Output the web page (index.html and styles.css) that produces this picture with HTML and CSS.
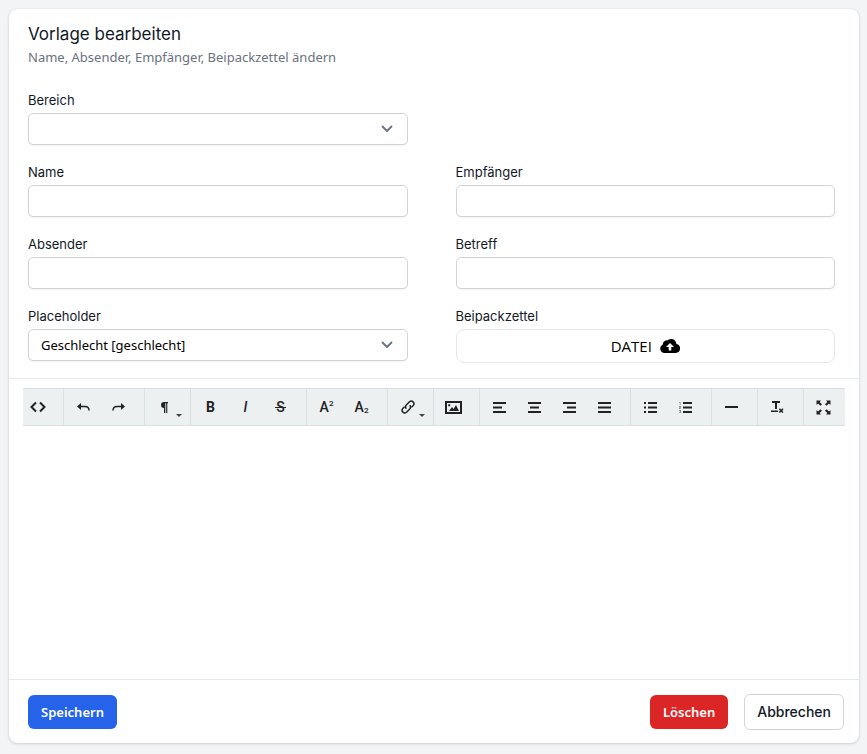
FILE: index.html
```html
<!DOCTYPE html>
<html lang="de">
<head>
<meta charset="utf-8">
<meta name="viewport" content="width=device-width, initial-scale=1">
<title>Vorlage bearbeiten</title>
<link rel="stylesheet" href="styles.css">
</head>
<body>
<form class="card">
  <header class="card-header">
    <h1 class="title">Vorlage bearbeiten</h1>
    <p class="subtitle">Name, Absender, Empfänger, Beipackzettel ändern</p>
  </header>

  <div class="fields">
    <div class="field field-first">
      <label for="bereich">Bereich</label>
      <select id="bereich" class="control select"><option></option></select>
    </div>
    <div class="field">
      <label for="name">Name</label>
      <input id="name" class="control" type="text">
    </div>
    <div class="field">
      <label for="empfaenger">Empfänger</label>
      <input id="empfaenger" class="control" type="text">
    </div>
    <div class="field">
      <label for="absender">Absender</label>
      <input id="absender" class="control" type="text">
    </div>
    <div class="field">
      <label for="betreff">Betreff</label>
      <input id="betreff" class="control" type="text">
    </div>
    <div class="field">
      <label for="placeholder">Placeholder</label>
      <select id="placeholder" class="control select"><option>Geschlecht [geschlecht]</option></select>
    </div>
    <div class="field">
      <label for="datei">Beipackzettel</label>
      <button id="datei" class="upload" type="button">DATEI
        <svg width="20" height="14" viewBox="0 0 20 14" aria-hidden="true"><path d="M4.5 14A4.4 4.4 0 0 1 2.6 5.7 5 5 0 0 1 7.6 1.200A5 5 0 0 1 10 0.300C13 -0.500 16 1.500 16.300 4.700A4.700 4.700 0 0 1 15.700 14Z"/><path class="cut" d="M10 4l4 4h-2.700v3.500H8.700V8H6z"/></svg>
      </button>
    </div>
  </div>

  <section class="editor">
    <div class="toolbar" role="toolbar">
      <div class="group group-first">
        <button type="button" class="tool" aria-label="HTML"><svg width="16" height="12" viewBox="0 0 16 12"><path class="line thick" d="M6 1.500L1.500 6 6 10.500M10 1.500L14.500 6 10 10.500"/></svg></button>
      </div>
      <div class="group">
        <button type="button" class="tool" aria-label="Rückgängig"><svg width="13" height="8" viewBox="0 0 13 8"><path d="M0 3.500L4 0v7z"/><path class="line" d="M3 3.500h5c2.500 0 4 1.500 4 4"/></svg></button>
        <button type="button" class="tool" aria-label="Wiederholen"><svg width="13" height="8" viewBox="0 0 13 8"><path d="M13 3.500L9 0v7z"/><path class="line" d="M10 3.500H5c-2.500 0-4 1.500-4 4"/></svg></button>
      </div>
      <div class="group">
        <button type="button" class="tool drop" aria-label="Formatierung"><svg width="7" height="11" viewBox="0 0 7 11"><path d="M3 0h4v1.200H6.300V11H5.200V1.200H4.300V11H3V6A3 3 0 0 1 3 0z"/></svg></button>
      </div>
      <div class="group">
        <button type="button" class="tool glyph bold">B</button>
        <button type="button" class="tool glyph italic">I</button>
        <button type="button" class="tool glyph strike">S</button>
      </div>
      <div class="group">
        <button type="button" class="tool glyph">A<sup>2</sup></button>
        <button type="button" class="tool glyph">A<sub>2</sub></button>
      </div>
      <div class="group">
        <button type="button" class="tool drop" aria-label="Link"><svg width="14" height="14" viewBox="0 0 14 14"><path class="line" d="M5.300 8.700A2.600 2.600 0 0 1 5.300 5L8.500 1.800A2.620 2.620 0 0 1 12.200 5.500L10.400 7.300M8.700 5.300A2.600 2.600 0 0 1 8.700 9L5.500 12.200A2.620 2.620 0 0 1 1.800 8.500L3.600 6.700"/></svg></button>
      </div>
      <div class="group">
        <button type="button" class="tool" aria-label="Bild"><svg width="17" height="13" viewBox="0 0 17 13"><path class="line thick" d="M1 1h15v11H1z"/><path d="M4 10l3-4 1.500 2L11 4l3 6zM3.200 3.200h2v2h-2z"/></svg></button>
      </div>
      <div class="group">
        <button type="button" class="tool" aria-label="Linksbündig"><svg width="13" height="11" viewBox="0 0 13 11"><path d="M0 0h13v2H0zM0 4.500h9v2H0zM0 9h13v2H0z"/></svg></button>
        <button type="button" class="tool" aria-label="Zentriert"><svg width="13" height="11" viewBox="0 0 13 11"><path d="M0 0h13v2H0zM2 4.500h9v2H2zM0 9h13v2H0z"/></svg></button>
        <button type="button" class="tool" aria-label="Rechtsbündig"><svg width="13" height="11" viewBox="0 0 13 11"><path d="M0 0h13v2H0zM4 4.500h9v2H4zM0 9h13v2H0z"/></svg></button>
        <button type="button" class="tool" aria-label="Blocksatz"><svg width="13" height="11" viewBox="0 0 13 11"><path d="M0 0h13v2H0zM0 4.500h13v2H0zM0 9h13v2H0z"/></svg></button>
      </div>
      <div class="group">
        <button type="button" class="tool" aria-label="Liste"><svg width="13" height="11" viewBox="0 0 13 11"><path d="M0 0h2v2H0zM4 0h9v2H4zM0 4.500h2v2H0zM4 4.500h9v2H4zM0 9h2v2H0zM4 9h9v2H4z"/></svg></button>
        <button type="button" class="tool" aria-label="Nummerierte Liste"><svg width="13" height="11" viewBox="0 0 13 11"><path d="M4 0h9v2H4zM4 4.500h9v2H4zM4 9h9v2H4z"/><path class="faint" d="M0 0h1.500v3H.800V.800H0zM0 4h2v1L1 6.500h1V7H0V6l1-1.300H0zM0 8h2v3H0v-.700h1v-.500H.500v-.500H1v-.500H0z"/></svg></button>
      </div>
      <div class="group">
        <button type="button" class="tool" aria-label="Trennlinie"><svg width="13" height="2" viewBox="0 0 13 2"><path d="M0 0h13v2H0z"/></svg></button>
      </div>
      <div class="group">
        <button type="button" class="tool" aria-label="Formatierung entfernen"><svg width="13" height="12" viewBox="0 0 13 12"><path d="M1 0h8v2H6v6H4V2H1zM0 9.500h7V11H0z"/><path class="line" d="M8.300 7.800l3.700 3.700M12 7.800l-3.700 3.700"/></svg></button>
      </div>
      <div class="group group-last">
        <button type="button" class="tool" aria-label="Vollbild"><svg width="15" height="15" viewBox="0 0 15 15"><path d="M0.500 0.500h4.500L3.600 1.900 6 4.300 4.500 5.800 2 3.400 0.500 5zM14.500 0.500V5L13 3.400 10.500 5.800 9 4.300 11.400 1.900 10 0.500zM0.500 14.500V10L2 11.600 4.500 9.200 6 10.700 3.600 13.100 5 14.500zM14.500 14.500H10l1.400-1.400L9 10.700l1.500-1.500 2.500 2.400 1.500-1.600z"/></svg></button>
      </div>
    </div>
    <div class="editor-body" contenteditable="true" role="textbox" aria-label="Inhalt"></div>
  </section>

  <footer class="footer">
    <button type="submit" class="btn primary">Speichern</button>
    <div class="footer-right">
      <button type="button" class="btn danger">Löschen</button>
      <button type="button" class="btn plain">Abbrechen</button>
    </div>
  </footer>
</form>
</body>
</html>
```
FILE: styles.css
```css
* {
  box-sizing: border-box;
}

body {
  margin: 0;
  padding: 9px 8px 11px 9px;
  min-height: 100vh;
  display: flex;
  background: #f3f4f6;
  color: #111827;
  font: 13px/18px Inter, sans-serif;
}

button,
input,
select {
  font: inherit;
  color: inherit;
  margin: 0;
}

.card {
  flex: 1;
  min-width: 0;
  display: flex;
  flex-direction: column;
  background: #fff;
  border-radius: 8px;
  box-shadow: 0 1px 3px rgba(0, 0, 0, 0.14), 0 0 1px rgba(0, 0, 0, 0.2);
}

.card-header {
  padding: 13px 19px 0;
}

.title {
  margin: 0;
  font-size: 17px;
  line-height: 24px;
  font-weight: 400;
}

.subtitle {
  margin: 2px 0 0;
  color: #6b7280;
  font-family: "Noto Sans", sans-serif;
}

.fields {
  display: grid;
  grid-template-columns: 1fr 1fr;
  gap: 18px 48px;
  padding: 25px 24px 15px 19px;
}

.field {
  display: flex;
  flex-direction: column;
  gap: 4px;
}

.field-first {
  grid-column: 1;
}

.field-first + .field {
  grid-column: 1;
}

.control {
  width: 100%;
  height: 32px;
  padding: 0 12px;
  border: 1px solid #d1d5db;
  border-radius: 5px;
  background: #fff;
  box-shadow: 0 1px 2px rgba(0, 0, 0, 0.05);
  font-family: "Noto Sans", sans-serif;
  color: #000;
}

.select {
  appearance: none;
  background: #fff url("data:image/svg+xml,%3Csvg xmlns='http://www.w3.org/2000/svg' viewBox='0 0 12 8'%3E%3Cpath d='M1.500 1.500L6 6l4.500-4.500' fill='none' stroke='%236b7280' stroke-width='1.800' stroke-linecap='round' stroke-linejoin='round'/%3E%3C/svg%3E") no-repeat right 14px center / 12px 8px;
}

.upload {
  height: 34px;
  display: flex;
  align-items: center;
  justify-content: center;
  gap: 8px;
  padding: 0;
  border: 1px solid #e5e7eb;
  border-radius: 8px;
  background: #fff;
  color: #000;
  font: 400 15px/20px "Open Sans", sans-serif;
}

.cut {
  fill: #fff;
}

.editor {
  flex: 1;
  display: flex;
  flex-direction: column;
  padding: 9px 14px 0;
  border-top: 1px solid #e5e7eb;
}

.toolbar {
  display: flex;
  height: 38px;
  background: #ecf0f1;
  border-top: 1px solid #d7e0e2;
  border-bottom: 1px solid #d7e0e2;
  color: #222;
}

.group {
  display: flex;
  padding: 0 8px 0 2px;
  border-right: 1px solid #d7e0e2;
}

.group-first {
  padding: 0 10px 0 0;
}

.group-first .tool {
  width: 30px;
}

.group-last {
  flex: 1;
  padding-right: 0;
  border-right: 0;
}

.tool {
  position: relative;
  width: 35px;
  height: 36px;
  display: flex;
  align-items: center;
  justify-content: center;
  padding: 0;
  border: 0;
  background: none;
}

.tool svg {
  fill: #222;
}

.tool .line {
  fill: none;
  stroke: #222;
  stroke-width: 1.5;
}

.tool .thick {
  stroke-width: 2;
}

.tool .faint {
  fill: #888;
}

.drop::after {
  content: "";
  position: absolute;
  right: 0;
  bottom: 8px;
  border: 3px solid transparent;
  border-top-color: #444;
  border-bottom: 0;
}

.glyph {
  font: 500 14px/16px Roboto, sans-serif;
}

.bold {
  font-weight: 700;
}

.italic {
  font-style: italic;
}

.strike::after {
  content: "";
  position: absolute;
  width: 11px;
  height: 1px;
  background: #222;
}

.glyph sup,
.glyph sub {
  font-size: 8px;
  line-height: 8px;
}

.glyph sup {
  margin-bottom: 6px;
}

.glyph sub {
  margin-top: 8px;
}

.editor-body {
  flex: 1;
  min-height: 253px;
  outline: 0;
}

.footer {
  display: flex;
  align-items: center;
  justify-content: space-between;
  padding: 14px 15px 13px 19px;
  border-top: 1px solid #e5e7eb;
}

.footer-right {
  display: flex;
  align-items: center;
  gap: 16px;
}

.btn {
  height: 34px;
  padding: 0 13px;
  border: 0;
  border-radius: 6px;
  color: #fff;
  font: 600 13px/18px "Noto Sans", sans-serif;
}

.primary {
  background: #2563eb;
}

.danger {
  background: #dc2626;
}

.plain {
  height: 36px;
  padding: 0 12px;
  border: 1px solid #d1d5db;
  background: #fff;
  color: #111827;
  font: 500 14px/20px Inter, sans-serif;
}
```
